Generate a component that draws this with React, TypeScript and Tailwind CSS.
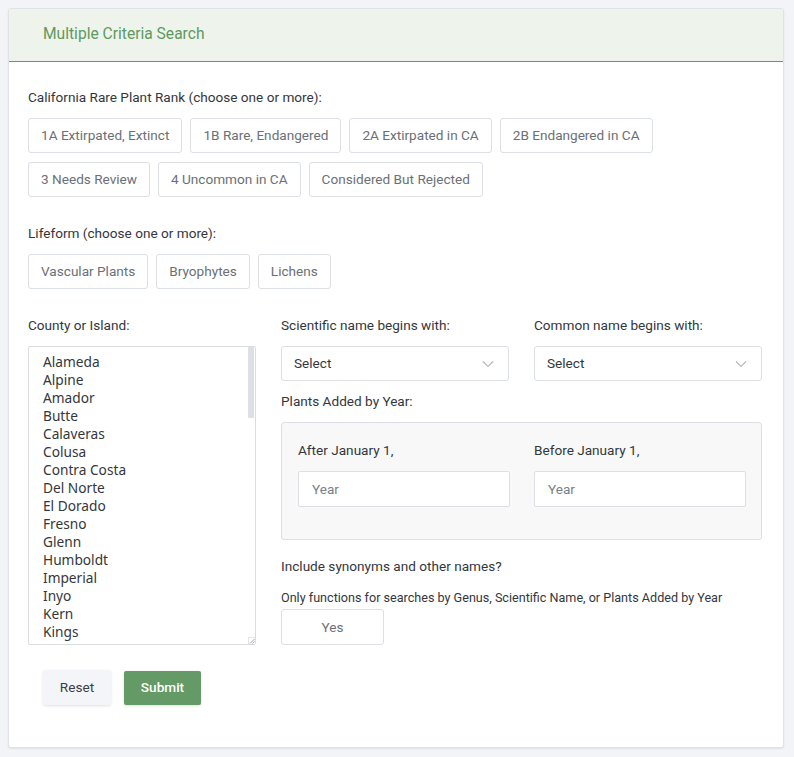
import React from "react";

const counties = [
  "Alameda","Alpine","Amador","Butte","Calaveras","Colusa","Contra Costa","Del Norte","El Dorado","Fresno","Glenn","Humboldt","Imperial","Inyo","Kern","Kings","Lake","Lassen",
];

function Btn({ children }: { children: React.ReactNode }) {
  return (
    <button className="h-[35px] px-[12px] border border-[#dcdfe3] rounded-[3px] bg-white text-[13.6px] text-[#6b7077] leading-none">
      {children}
    </button>
  );
}

function Chevron() {
  return (
    <svg width="12" height="8" viewBox="0 0 12 8" fill="none">
      <path d="M1 1.5 L6 6.5 L11 1.5" stroke="#b5b8bd" strokeWidth="1.1" />
    </svg>
  );
}

export default function App() {
  return (
    <div className="min-h-[757px] bg-[#f3f4f8] pt-[8px] px-[8px] pb-[10px] text-[#33373d]" style={{ fontFamily: "Roboto, 'Liberation Sans', sans-serif" }}>
      <div className="w-[776px] bg-white border border-[#dfe2e6] rounded-[3px] shadow-[0_1px_2px_rgba(0,0,0,0.08)]">
        <div className="h-[53px] bg-[#eef3ec] border-b border-[#5f9a61] flex items-center pl-[34px]">
          <span className="text-[15.6px] text-[#5e9a5f]">Multiple Criteria Search</span>
        </div>
        <div className="px-[19px] pt-[25px] pb-[42px]">
          <div className="text-[13.6px] leading-[20px]">California Rare Plant Rank (choose one or more):</div>
          <div className="mt-[11px] flex flex-wrap gap-x-[8px] gap-y-[9px] w-[660px]">
            <Btn>1A Extirpated, Extinct</Btn>
            <Btn>1B Rare, Endangered</Btn>
            <Btn>2A Extirpated in CA</Btn>
            <Btn>2B Endangered in CA</Btn>
            <Btn>3 Needs Review</Btn>
            <Btn>4 Uncommon in CA</Btn>
            <Btn>Considered But Rejected</Btn>
          </div>
          <div className="mt-[26px] text-[13.6px] leading-[20px]">Lifeform (choose one or more):</div>
          <div className="mt-[11px] flex gap-[8px]">
            <Btn>Vascular Plants</Btn>
            <Btn>Bryophytes</Btn>
            <Btn>Lichens</Btn>
          </div>
          <div className="mt-[26px] flex gap-[25px]">
            <div className="w-[228px]">
              <div className="text-[13.6px] leading-[20px]">County or Island:</div>
              <div className="relative mt-[11px] h-[299px] border border-[#d9dce0] rounded-[2px] overflow-hidden">
                <div className="pl-[14px] pt-[6px] text-[13.7px] leading-[18px] text-[#34373b]" style={{ fontFamily: "'Noto Sans', 'Open Sans', sans-serif" }}>
                  {counties.map((c) => (
                    <div key={c}>{c}</div>
                  ))}
                </div>
                <div className="absolute right-[1px] top-[0px] w-[6px] h-[71px] bg-[#dcdfe3] rounded-[1px]" />
                <div className="absolute right-0 bottom-0 w-[7px] h-[7px] bg-white border-l border-t border-[#e5e5e5]">
                  <svg width="7" height="7" viewBox="0 0 7 7"><path d="M1 5.5 L5.5 1 M3.5 5.5 L5.5 3.5" stroke="#888" strokeWidth="0.8" /></svg>
                </div>
              </div>
            </div>
            <div className="w-[481px]">
              <div className="flex gap-[25px]">
                <div className="w-[228px]">
                  <div className="text-[13.6px] leading-[20px]">Scientific name begins with:</div>
                  <div className="mt-[11px] h-[35px] border border-[#dcdfe3] rounded-[3px] flex items-center justify-between pl-[12px] pr-[14px] text-[13.6px] text-[#33373d]">
                    <span>Select</span>
                    <Chevron />
                  </div>
                </div>
                <div className="w-[228px]">
                  <div className="text-[13.6px] leading-[20px]">Common name begins with:</div>
                  <div className="mt-[11px] h-[35px] border border-[#dcdfe3] rounded-[3px] flex items-center justify-between pl-[12px] pr-[14px] text-[13.6px] text-[#33373d]">
                    <span>Select</span>
                    <Chevron />
                  </div>
                </div>
              </div>
              <div className="mt-[10px] text-[13.6px] leading-[20px]">Plants Added by Year:</div>
              <div className="mt-[11px] h-[118px] bg-[#f8f8f9] border border-[#dcdfe3] rounded-[3px] pl-[16px] pt-[17px] flex gap-[24px]">
                <div className="w-[212px]">
                  <div className="text-[13.6px] leading-[20px]">After January 1,</div>
                  <div className="mt-[11px] h-[36px] bg-white border border-[#dcdfe3] rounded-[2px] flex items-center pl-[13px] text-[13.6px] text-[#797e85]">Year</div>
                </div>
                <div className="w-[212px]">
                  <div className="text-[13.6px] leading-[20px]">Before January 1,</div>
                  <div className="mt-[11px] h-[36px] bg-white border border-[#dcdfe3] rounded-[2px] flex items-center pl-[13px] text-[13.6px] text-[#797e85]">Year</div>
                </div>
              </div>
              <div className="mt-[16px] text-[13.6px] leading-[20px]">Include synonyms and other names?</div>
              <div className="mt-[14px] text-[12.6px] leading-[16px]">Only functions for searches by Genus, Scientific Name, or Plants Added by Year</div>
              <button className="mt-[3px] w-[103px] h-[36px] border border-[#dcdfe3] rounded-[3px] bg-white text-[13.6px] text-[#6b7077]">Yes</button>
            </div>
          </div>
          <div className="mt-[25px] ml-[15px] flex gap-[13px] items-center">
            <button className="w-[68px] h-[35px] bg-[#f4f5f9] rounded-[3px] text-[13.6px] text-[#3a3e44] shadow-[0_1px_3px_rgba(0,0,0,0.12)]">Reset</button>
            <button className="w-[77px] h-[34px] bg-[#649a65] rounded-[2px] text-[13.6px] font-medium text-white shadow-[0_1px_3px_rgba(0,0,0,0.12)]">Submit</button>
          </div>
        </div>
      </div>
    </div>
  );
}
